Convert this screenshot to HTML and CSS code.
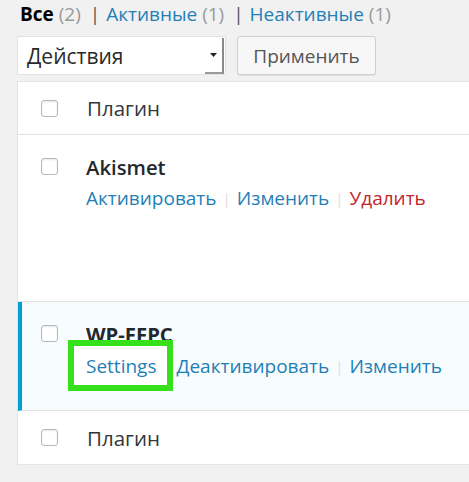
FILE: index.html
```html
<!DOCTYPE html>
<html lang="ru">
<head>
<meta charset="utf-8">
<link rel="stylesheet" href="styles.css">
</head>
<body>
<div class="page">
  <ul class="filters">
    <li><b class="current">Все</b> <span class="count">(2)</span> <span class="sep">|</span></li>
    <li><a>Активные</a> <span class="count">(1)</span> <span class="sep">|</span></li>
    <li><a>Неактивные</a> <span class="count">(1)</span></li>
  </ul>
  <div class="bulk">
    <div class="select">
      <span class="select-label">Действия</span>
      <span class="select-arrow"><svg width="7" height="4" viewBox="0 0 7 4"><path d="M0 0h7L3.5 4z" fill="#222"/></svg></span>
    </div>
    <button class="btn">Применить</button>
  </div>
  <div class="table">
    <div class="row head">
      <span class="cb"></span>
      <span class="col-title">Плагин</span>
    </div>
    <div class="row plugin inactive">
      <span class="cb"></span>
      <div class="info">
        <strong class="name">Akismet</strong>
        <div class="actions">
          <a>Активировать</a><span class="sep">|</span><a>Изменить</a><span class="sep">|</span><a class="delete">Удалить</a>
        </div>
      </div>
    </div>
    <div class="row plugin active">
      <span class="cb"></span>
      <div class="info">
        <strong class="name bold">WP-FFPC</strong>
        <div class="actions">
          <span class="highlight"><a>Settings</a></span><span class="sep hidden">|</span><a>Деактивировать</a><span class="sep">|</span><a>Изменить</a>
        </div>
      </div>
    </div>
    <div class="row head foot">
      <span class="cb"></span>
      <span class="col-title">Плагин</span>
    </div>
  </div>
</div>
</body>
</html>
```
FILE: styles.css
```css
html, body {
  margin: 0;
  padding: 0;
  overflow: hidden;
  background: #f1f1f1;
}
body {
  font-family: "Open Sans", "Liberation Sans", sans-serif;
  font-size: 19px;
  color: #32373c;
}
.page {
  padding-left: 17px;
  width: 560px;
}
.filters {
  list-style: none;
  margin: 0;
  padding: 0 0 0 3px;
  display: flex;
  height: 28px;
  align-items: center;
  color: #555;
  font-size: 19px;
}
.filters li {
  white-space: pre;
}
.filters .current { color: #000; font-weight: 700; }
.filters a { color: #1f7fb6; }
.filters .count { color: #999; }
.filters .sep { color: #555; margin: 0 6px 0 4px; }
.bulk {
  display: flex;
  gap: 11px;
  margin-top: 8px;
  height: 39px;
}
.select {
  width: 209px;
  box-sizing: border-box;
  background: #fff;
  border: 1px solid #e2e2e2;
  display: flex;
  align-items: center;
  justify-content: space-between;
  padding-left: 9px;
  color: #2a2a2a;
  font-size: 21px;
}
.select-arrow {
  align-self: stretch;
  width: 17px;
  margin: 1px 1px 0 0;
  border-right: 2px solid #8a8a8a;
  border-bottom: 2px solid #9a9a9a;
  display: flex;
  align-items: center;
  justify-content: center;
  background: #fff;
}
.btn {
  width: 139px;
  box-sizing: border-box;
  font: inherit;
  font-size: 19px;
  color: #555;
  background: #f7f7f7;
  border: 1px solid #cfcfcf;
  border-radius: 3px;
  box-shadow: 0 1px 0 #e0e0e0;
  padding: 0;
}
.table {
  margin-top: 6px;
  background: #fff;
  border: 1px solid #e5e5e5;
  border-right: 0;
  box-shadow: 0 1px 1px rgba(0,0,0,.06);
}
.row {
  display: flex;
  border-bottom: 1px solid #e1e1e1;
}
.row:last-child { border-bottom: 0; }
.cb {
  flex: none;
  width: 17px;
  height: 17px;
  box-sizing: border-box;
  border: 1px solid #b4b9be;
  border-radius: 3px;
  background: #fff;
  box-shadow: inset 0 1px 2px rgba(0,0,0,.1);
  margin-left: 23px;
}
.head {
  height: 52px;
  align-items: center;
}
.foot { height: 53px; }
.col-title {
  margin-left: 29px;
  font-size: 20.5px;
  color: #32373c;
}
.plugin {
  align-items: flex-start;
}
.plugin .cb { margin-top: 23px; }
.inactive { height: 166px; }
.active {
  height: 108px;
  background: #f7fcfe;
  border-left: 4px solid #00a0d2;
}
.active .cb { margin-left: 19px; }
.info {
  margin-left: 28px;
  padding-top: 19px;
}
.name {
  display: block;
  font-weight: 600;
  font-size: 20.3px;
  line-height: 26px;
  color: #23282d;
}
.name.bold { font-weight: 700; }
.actions {
  margin-top: 6px;
  font-size: 19px;
  line-height: 24px;
  display: flex;
  white-space: nowrap;
}
.actions a { color: #1f7fb6; }
.actions .delete { color: #c0262c; }
.actions .sep {
  color: #ddd;
  margin: 0 6px 0 6px;
  font-size: 15px;
}
.highlight {
  position: relative;
  z-index: 0;
}
.highlight::before {
  content: "";
  position: absolute;
  left: -18px;
  right: -17px;
  top: -14px;
  bottom: -13px;
  border: 6px solid #36e11b;
  background: #fff;
  z-index: -1;
}
.actions .sep.hidden { visibility: hidden; margin: 0 0 0 20px; width: 0; }
.active .actions { margin-top: 7px; }
```
